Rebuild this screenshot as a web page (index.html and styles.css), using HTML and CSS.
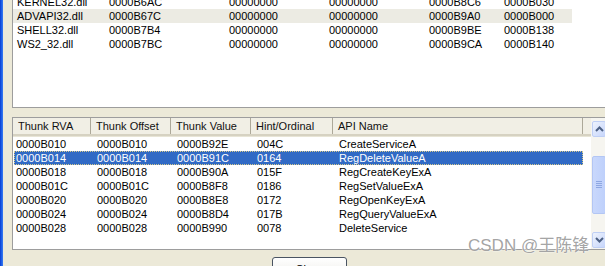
FILE: index.html
```html
<!DOCTYPE html>
<html lang="en">
<head>
  <meta charset="UTF-8" />
  <title>Import Table</title>
  <link rel="stylesheet" href="styles.css">
</head>
<body>
  <div class="frame-left"></div>

  <div class="dialog">
    <div class="dll-list">
      <div class="dll-rows">
        <div class="dll-row"><span>KERNEL32.dll</span><span>0000B6AC</span><span>00000000</span><span>00000000</span><span>0000B8C6</span><span>0000B030</span></div>
        <div class="dll-row inactive-sel"><span>ADVAPI32.dll</span><span>0000B67C</span><span>00000000</span><span>00000000</span><span>0000B9A0</span><span>0000B000</span></div>
        <div class="dll-row"><span>SHELL32.dll</span><span>0000B7B4</span><span>00000000</span><span>00000000</span><span>0000B9BE</span><span>0000B138</span></div>
        <div class="dll-row"><span>WS2_32.dll</span><span>0000B7BC</span><span>00000000</span><span>00000000</span><span>0000B9CA</span><span>0000B140</span></div>
      </div>
    </div>

    <div class="thunk-list">
      <div class="thunk-body">
        <div class="thunk-head">
          <span>Thunk RVA</span>
          <span>Thunk Offset</span>
          <span>Thunk Value</span>
          <span>Hint/Ordinal</span>
          <span>API Name</span>
        </div>
        <div class="thunk-rows">
          <div class="thunk-row"><span>0000B010</span><span>0000B010</span><span>0000B92E</span><span>004C</span><span>CreateServiceA</span></div>
          <div class="thunk-row selected"><span>0000B014</span><span>0000B014</span><span>0000B91C</span><span>0164</span><span>RegDeleteValueA</span></div>
          <div class="thunk-row"><span>0000B018</span><span>0000B018</span><span>0000B90A</span><span>015F</span><span>RegCreateKeyExA</span></div>
          <div class="thunk-row"><span>0000B01C</span><span>0000B01C</span><span>0000B8F8</span><span>0186</span><span>RegSetValueExA</span></div>
          <div class="thunk-row"><span>0000B020</span><span>0000B020</span><span>0000B8E8</span><span>0172</span><span>RegOpenKeyExA</span></div>
          <div class="thunk-row"><span>0000B024</span><span>0000B024</span><span>0000B8D4</span><span>017B</span><span>RegQueryValueExA</span></div>
          <div class="thunk-row"><span>0000B028</span><span>0000B028</span><span>0000B990</span><span>0078</span><span>DeleteService</span></div>
        </div>
      </div>

      <div class="vscroll">
        <div class="sb-btn">
          <svg width="9" height="6" viewBox="0 0 9 6"><path d="M1 5 L4.5 1.5 L8 5" fill="none" stroke="#4d6185" stroke-width="2"/></svg>
        </div>
        <div class="sb-track top"></div>
        <div class="sb-thumb">
          <div class="grip"></div>
          <div class="grip"></div>
          <div class="grip"></div>
          <div class="grip"></div>
        </div>
        <div class="sb-track"></div>
        <div class="sb-btn">
          <svg width="9" height="6" viewBox="0 0 9 6"><path d="M1 1 L4.5 4.5 L8 1" fill="none" stroke="#4d6185" stroke-width="2"/></svg>
        </div>
      </div>
    </div>

    <div class="actions">
      <button class="btn">Close</button>
    </div>
  </div>

  <div class="watermark">CSDN @王陈锋</div>
</body>
</html>
```

FILE: styles.css
```css
html,
body {
  margin: 0;
  padding: 0;
  overflow: hidden;
  height: 266px;
}

body {
  display: flex;
  background: #ece9d8;
  font-family: 'Liberation Sans', Arial, sans-serif;
  font-size: 11px;
  color: #000;
}

.frame-left {
  width: 3px;
  flex: 0 0 3px;
  background: linear-gradient(to right, #0a3bd0, #1d5fe6, #3a7bf2);
}

.dialog {
  flex: 1;
  padding-left: 9px;
  min-width: 0;
}

/* upper list: imported modules */
.dll-list {
  width: 600px;
  height: 107px;
  overflow: hidden;
  background: #fff;
  border-left: 1px solid #9d9d9d;
  border-bottom: 1px solid #9d9d9d;
}

.dll-rows {
  margin-top: -5px;
}

.dll-row {
  display: grid;
  grid-template-columns: 89px 120px 100px 100px 75px 75px;
  width: 559px;
  height: 14px;
  line-height: 14px;
}

.dll-row span {
  padding-left: 7px;
  white-space: nowrap;
}

.dll-row span:first-child {
  padding-left: 4px;
}

.inactive-sel {
  background: #ecebe3;
}

/* lower list: thunks */
.thunk-list {
  display: flex;
  width: 594px;
  height: 131px;
  margin-top: 9px;
  background: #fff;
  border: 1px solid #9d9d9d;
}

.thunk-body {
  flex: 1;
  overflow: hidden;
}

.thunk-head {
  display: grid;
  grid-template-columns: 78px 80px 80px 82px 250px;
  height: 16px;
  line-height: 16px;
  background: #f1efe5;
  border-bottom: 2px solid #d6d2c2;
  box-shadow: 0 1px 0 #e8e5d6;
}

.thunk-head span {
  padding-left: 5px;
  border-right: 1px solid #aca899;
  white-space: nowrap;
  color: #111;
}

.thunk-rows {
  padding-top: 1px;
}

.thunk-row {
  display: grid;
  grid-template-columns: 78px 80px 80px 82px 250px;
  height: 14px;
  line-height: 14px;
  margin-left: 1px;
  width: 569px;
}

.thunk-row span {
  padding-left: 5px;
  white-space: nowrap;
}

.thunk-row span:first-child {
  padding-left: 2px;
}

.thunk-row.selected {
  background: #316ac5;
  color: #fff;
  outline: 1px dotted #d7c98a;
  outline-offset: -1px;
}

/* xp style scrollbar */
.vscroll {
  width: 16px;
  flex: 0 0 16px;
  display: flex;
  flex-direction: column;
  background: #f6f5f0;
  padding-top: 2px;
}

.sb-btn {
  height: 14px;
  margin: 1px;
  border: 1px solid #bfcff5;
  border-radius: 2px;
  background: linear-gradient(to bottom right, #eef3fd, #c6d5fb);
  display: flex;
  align-items: center;
  justify-content: center;
}

.sb-track.top {
  height: 34px;
}

.sb-track {
  flex: 1;
}

.sb-thumb {
  height: 56px;
  margin: 0 1px;
  border: 1px solid #b3c6f4;
  border-radius: 2px;
  background: linear-gradient(to right, #c9d8fc, #bed0fb);
  display: flex;
  flex-direction: column;
  align-items: center;
  justify-content: center;
  gap: 1px;
}

.grip {
  width: 6px;
  height: 1px;
  background: #8ea7e2;
}

.actions {
  padding-left: 260px;
  margin-top: 7px;
}

.btn {
  width: 75px;
  height: 23px;
  border: 1px solid #4a5462;
  border-radius: 3px;
  background: linear-gradient(to bottom, #ffffff, #ecebe6);
  font-family: 'Liberation Sans', Arial, sans-serif;
  font-size: 11px;
  color: #000;
  padding: 0;
}

.watermark {
  position: absolute;
  left: 468px;
  top: 231px;
  font-family: 'Liberation Sans', 'Noto Sans CJK SC', sans-serif;
  font-size: 17px;
  color: rgba(140, 140, 140, 0.8);
  text-shadow: 0 0 2px #fff, 0 0 1px #fff;
  white-space: nowrap;
}
```
